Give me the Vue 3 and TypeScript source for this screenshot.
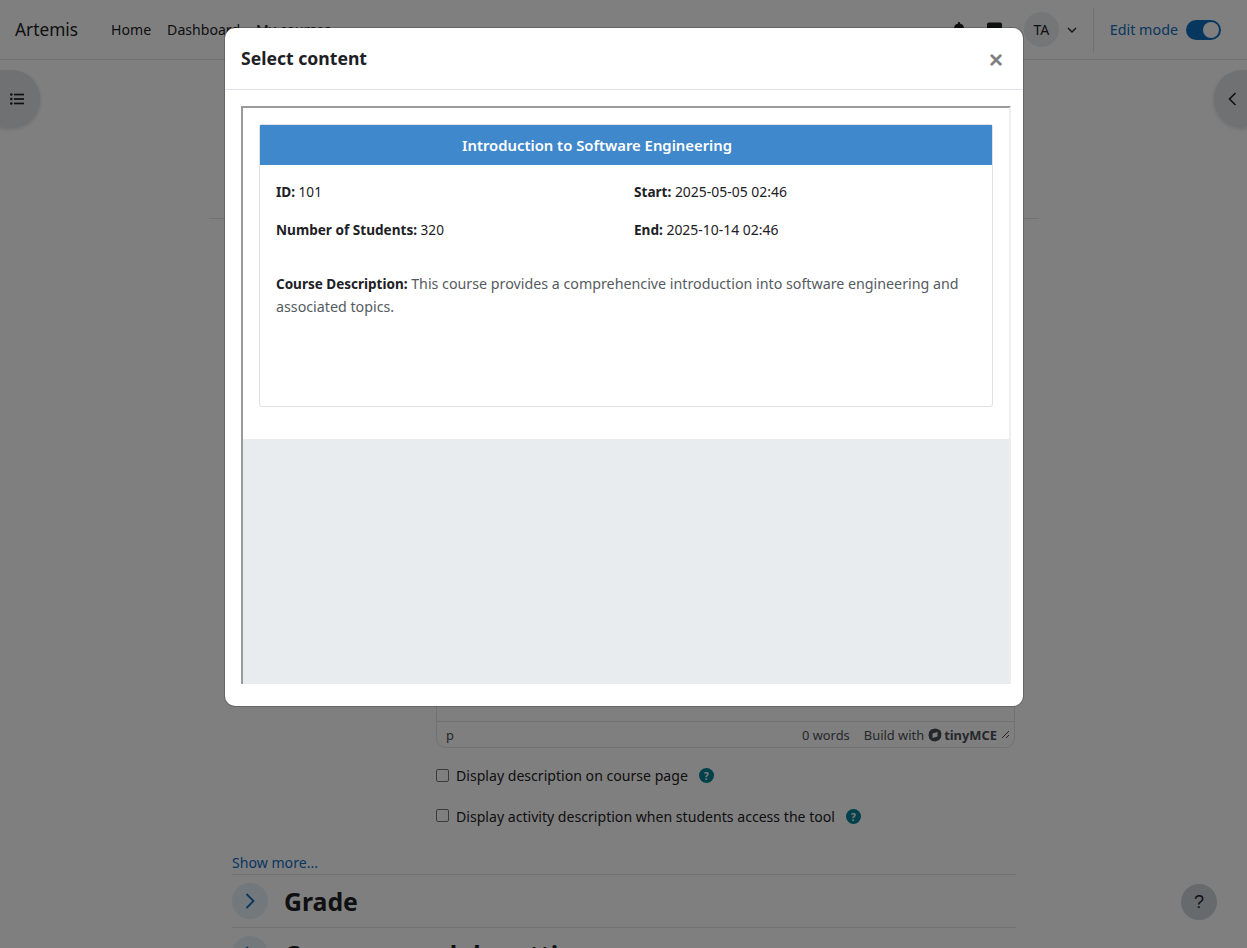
<template>
  <div class="page">
    <header class="topbar">
      <span class="brand">Artemis</span>
      <nav class="nav">
        <a>Home</a>
        <a>Dashboard</a>
        <a>My courses</a>
      </nav>
      <div class="usernav">
        <svg class="top-icon" width="14" height="16" viewBox="0 0 14 16"><path d="M7 0a1.2 1.2 0 0 0-1.2 1.2v.6A4.8 4.8 0 0 0 2 6.500c0 3-1 4.300-2 5.300V13h14v-1.200c-1-1-2-2.300-2-5.300a4.800 4.800 0 0 0-3.800-4.700v-.6A1.200 1.200 0 0 0 7 0z" /></svg>
        <svg class="top-icon chat" width="15" height="16" viewBox="0 0 16 16"><path d="M2 0h12a2 2 0 0 1 2 2v9a2 2 0 0 1-2 2H6l-4 3v-3a2 2 0 0 1-2-2V2a2 2 0 0 1 2-2z" /></svg>
        <span class="avatar">TA</span>
        <svg class="caret" width="10" height="6" viewBox="0 0 10 6"><path d="M1 1l4 4 4-4" /></svg>
        <span class="divider"></span>
        <span class="edit-label">Edit mode</span>
        <span class="switch"><span class="knob"></span></span>
      </div>
    </header>

    <main class="content">
      <div class="heading-rule"></div>
      <div class="form">
        <div class="editor">
          <div class="status">
            <span class="status-path">p</span>
            <span class="status-words">0 words</span>
            <span class="status-build">Build with</span>
            <svg class="tiny-logo" width="14" height="14" viewBox="0 0 14 14">
              <path d="M7 .5l2.500.5 3 1.500.9 3-.4 4-2 2.500-3.500 1.500-3.500-.5-2.500-2-1-3.500.5-3.500 2-2.500z" />
              <path class="tiny-hole" d="M4.500 5.500l5-1.500v4.500l-5 1.500z" />
            </svg>
            <span class="status-tiny">tinyMCE</span>
            <svg class="grip" width="9" height="9" viewBox="0 0 9 9"><path d="M1 8l7-7M5 8l3-3" /></svg>
          </div>
        </div>

        <label class="check first">
          <span class="box"></span>
          <span>Display description on course page</span>
          <span class="help-dot">?</span>
        </label>
        <label class="check second">
          <span class="box"></span>
          <span>Display activity description when students access the tool</span>
          <span class="help-dot">?</span>
        </label>
      </div>

      <a class="show-more">Show more...</a>
      <section v-for="title in sections" :key="title" class="section">
        <span class="section-toggle">
          <svg width="10" height="16" viewBox="0 0 10 16"><path d="M1.500 1l7 7-7 7" /></svg>
        </span>
        <h3>{{ title }}</h3>
      </section>
    </main>

    <button class="drawer-toggle left" type="button">
      <svg width="14" height="12" viewBox="0 0 14 12">
        <circle cx="1.300" cy="1.500" r="1.300" />
        <circle cx="1.300" cy="6" r="1.300" />
        <circle cx="1.300" cy="10.500" r="1.300" />
        <rect x="4" y="0.700" width="10" height="1.700" />
        <rect x="4" y="5.150" width="10" height="1.700" />
        <rect x="4" y="9.600" width="10" height="1.700" />
      </svg>
    </button>
    <button class="drawer-toggle right" type="button">
      <svg width="9" height="14" viewBox="0 0 9 14"><path d="M7.500 1l-6 6 6 6" /></svg>
    </button>
    <button class="page-help" type="button">?</button>

    <div class="backdrop"></div>

    <div class="modal" role="dialog">
      <div class="modal-header">
        <h5>Select content</h5>
        <span class="close">&times;</span>
      </div>
      <div class="modal-body">
        <div class="frame">
          <div class="frame-page">
            <div class="card">
              <div class="card-title"><span>{{ course.name }}</span></div>
              <div class="card-body">
                <div class="facts">
                  <p><b>ID:</b> {{ course.id }}</p>
                  <p><b>Start:</b> <span class="date">{{ course.start }}</span></p>
                  <p><b>Number of Students:</b> {{ course.students }}</p>
                  <p><b>End:</b> <span class="date">{{ course.end }}</span></p>
                </div>
                <p class="description"><b>Course Description:</b> {{ course.description }}</p>
              </div>
            </div>
          </div>
        </div>
      </div>
    </div>
  </div>
</template>

<script setup lang="ts">
const sections: string[] = ["Grade", "Common module settings"];

const course = {
  name: "Introduction to Software Engineering",
  id: 101,
  students: 320,
  start: "2025-05-05 02:46",
  end: "2025-10-14 02:46",
  description:
    "This course provides a comprehencive introduction into software engineering and associated topics.",
};
</script>

<style>
html,
body {
  margin: 0;
  height: 100%;
  overflow: hidden;
}
</style>

<style scoped>
.page {
  position: relative;
  width: 1247px;
  height: 948px;
  overflow: hidden;
  background: #fff;
  color: #1d2125;
  font-family: "Noto Sans", "Liberation Sans", sans-serif;
  font-size: 14.1px;
}

.topbar {
  height: 59px;
  display: flex;
  align-items: center;
  padding: 0 26px 0 15px;
  border-bottom: 1px solid #dee2e6;
}

.brand {
  font-size: 17.300px;
  width: 96px;
}

.nav {
  display: flex;
  gap: 16px;
}

.usernav {
  margin-left: auto;
  display: flex;
  align-items: center;
}

.top-icon {
  fill: #1d2125;
  margin-right: 21px;
}

.top-icon.chat {
  margin-right: 22px;
}

.avatar {
  width: 35px;
  height: 35px;
  border-radius: 50%;
  background: #e9ecef;
  display: flex;
  align-items: center;
  justify-content: center;
}

.caret {
  margin-left: 8px;
  fill: none;
  stroke: #1d2125;
  stroke-width: 1.300;
}

.divider {
  width: 1px;
  height: 44px;
  background: #dee2e6;
  margin: 0 16px 0 16px;
}

.edit-label {
  color: #0f6cbf;
  margin-right: 8px;
  font-size: 14.300px;
}

.switch {
  width: 35px;
  height: 20px;
  border-radius: 10px;
  background: #0f6cbf;
  display: flex;
  align-items: center;
  justify-content: flex-end;
  padding: 0 2px;
  box-sizing: border-box;
}

.knob {
  width: 16px;
  height: 16px;
  border-radius: 50%;
  background: #fff;
}

.content {
  padding: 0 0 0 232px;
  width: 784px;
}

.heading-rule {
  margin: 158px 0 0 -23px;
  width: 830px;
  height: 1px;
  background: #dee2e6;
}

.form {
  padding-left: 204px;
  width: 580px;
}

.editor {
  margin-top: 470px;
  height: 57px;
  border: 1px solid #dee2e6;
  border-radius: 0 0 10px 10px;
  width: 577px;
  display: flex;
  flex-direction: column;
  justify-content: flex-end;
}

.status {
  height: 25px;
  display: flex;
  align-items: center;
  padding: 0 4px 0 9px;
  font-size: 12.900px;
  color: #495057;
  border-top: 1px solid #dee2e6;
}

.status-path {
  margin-right: auto;
}

.status-words {
  margin-right: -1px;
}

.status-build {
  margin-left: 15px;
}

.tiny-logo {
  margin-left: 4px;
  fill: #495057;
}

.tiny-hole {
  fill: #fff;
}

.status-tiny {
  margin-left: 2px;
  font-weight: 700;
}

.grip {
  margin-left: 4px;
  fill: none;
  stroke: #495057;
}

.check {
  display: flex;
  align-items: center;
  white-space: nowrap;
}

.check.first {
  margin-top: 18px;
}

.check.second {
  margin-top: 22px;
}

.check.second .box {
  margin-bottom: 2px;
}

.box {
  width: 11px;
  height: 11px;
  border: 1px solid #767676;
  border-radius: 2px;
  background: #fff;
  margin-right: 7px;
  flex-shrink: 0;
}

.help-dot {
  width: 15px;
  height: 15px;
  margin-left: 11px;
  border-radius: 50%;
  background: #008196;
  color: #fff;
  font-size: 10px;
  font-weight: 700;
  display: flex;
  align-items: center;
  justify-content: center;
}

.show-more {
  display: block;
  margin-top: 25px;
  line-height: 23px;
  color: #0f6cbf;
}

.section {
  display: flex;
  align-items: center;
  height: 52px;
  border-top: 1px solid #dee2e6;
  gap: 16px;
}

.section-toggle {
  width: 36px;
  height: 36px;
  border-radius: 50%;
  background: #e7f0f8;
  display: flex;
  align-items: center;
  justify-content: center;
}

.section-toggle svg {
  fill: none;
  stroke: #0f6cbf;
  stroke-width: 1.800;
}

.section h3 {
  margin: 0;
  font-size: 24.800px;
  font-weight: 700;
  white-space: nowrap;
}

.drawer-toggle {
  position: absolute;
  top: 70px;
  height: 57px;
  border: 0;
  padding: 0;
  background: #dee2e6;
  display: flex;
  align-items: center;
  justify-content: center;
  box-shadow: 0 2px 4px rgba(0, 0, 0, 0.15);
}

.drawer-toggle.left {
  left: 0;
  width: 40px;
  border-radius: 0 28px 28px 0;
  padding-right: 6px;
  fill: #1d2125;
}

.drawer-toggle.right {
  right: 0;
  width: 33px;
  border-radius: 28px 0 0 28px;
  padding-left: 4px;
}

.drawer-toggle.right svg {
  fill: none;
  stroke: #1d2125;
  stroke-width: 1.600;
}

.page-help {
  position: absolute;
  left: 1181px;
  top: 884px;
  width: 36px;
  height: 36px;
  border: 0;
  border-radius: 50%;
  background: #ced4da;
  color: #1d2125;
  font-family: "Liberation Sans", sans-serif;
  font-size: 18px;
}

.backdrop {
  position: absolute;
  inset: 0;
  background: rgba(0, 0, 0, 0.5);
}

.modal {
  position: absolute;
  left: 225px;
  top: 28px;
  width: 798px;
  height: 678px;
  display: flex;
  flex-direction: column;
  background: #fff;
  border-radius: 10px;
  box-shadow: 0 0 0 1px rgba(0, 0, 0, 0.2);
}

.modal-header {
  height: 61px;
  flex-shrink: 0;
  display: flex;
  align-items: center;
  justify-content: space-between;
  padding: 0 20px 0 16px;
  border-bottom: 1px solid #dee2e6;
}

.modal-header h5 {
  margin: -2px 0 0;
  font-size: 17.600px;
  font-weight: 700;
}

.close {
  font-size: 24px;
  font-weight: 700;
  line-height: 1;
  color: #808080;
  margin-top: 3px;
  font-family: "Liberation Sans", sans-serif;
}

.modal-body {
  padding: 16px;
  flex: 1;
  min-height: 0;
  display: flex;
}

.frame {
  flex: 0 0 770px;
  height: 578px;
  box-sizing: border-box;
  border-style: solid;
  border-width: 2px 2px 0;
  border-color: #9a9a9a #eeeeee transparent #9a9a9a;
  background: #e9ecef;
}

.frame-page {
  background: #fff;
  padding: 16px 16px 32px;
  height: 283px;
}

.card {
  height: 283px;
  box-sizing: border-box;
  border: 1px solid #dee2e6;
  border-radius: 3px;
}

.card-title {
  height: 40px;
  background: #3f88cc;
  color: #fff;
  font-weight: 600;
  font-size: 14.830px;
  display: flex;
  align-items: center;
  justify-content: center;
  padding-right: 58px;
}

.card-body {
  padding: 16px;
  font-size: 13.600px;
}

.facts {
  display: grid;
  grid-template-columns: 358px 1fr;
  row-gap: 16px;
}

.facts p {
  margin: 0;
  line-height: 22px;
}

.date {
  font-size: 13.950px;
}

.description {
  margin: 31px 0 0;
  line-height: 23px;
  color: #555b61;
  font-size: 14.250px;
}

.description b {
  color: #1d2125;
  font-size: 13.500px;
  line-height: 1;
}
</style>
